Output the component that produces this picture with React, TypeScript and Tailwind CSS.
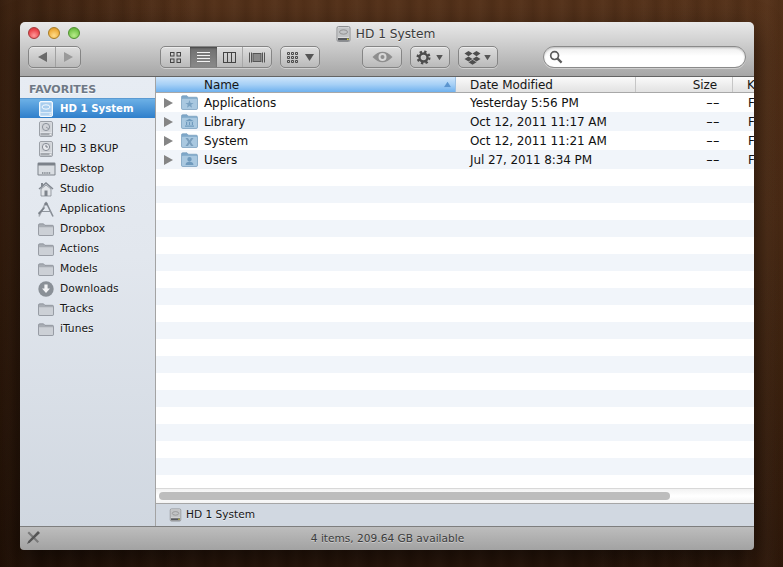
import React from "react";

const Tri = ({ dir, c, className }: { dir: "l" | "r" | "d" | "u"; c: string; className?: string }) => {
  const p = { l: "9,0 9,10 0,5", r: "0,0 9,5 0,10", d: "0,0 9,0 4.5,7", u: "0,7 9,7 4.5,0" }[dir];
  const h = dir === "d" || dir === "u" ? 7 : 10;
  return (
    <svg width="9" height={h} viewBox={`0 0 9 ${h}`} className={className}>
      <polygon points={p} fill={c} />
    </svg>
  );
};

const HD = ({ w = 16, h = 16, sel = false, variant = "sys" }: { w?: number; h?: number; sel?: boolean; variant?: "sys" | "disc" | "tm" }) => {
  const body = sel ? "#dcebf9" : variant === "sys" ? "#dcdcdc" : "#dfe2e7";
  const line = sel ? "#f4f9fe" : variant === "sys" ? "#8d8f92" : "#9ba0a7";
  const top = sel ? "#a8cdee" : variant === "sys" ? "#c2c4c6" : "#d0d3d8";
  return (
    <svg width={w} height={h} viewBox="0 0 16 16">
      <rect x="1.5" y="0.5" width="13" height="15" rx="1.5" fill={body} stroke={line} />
      <rect x="2.5" y="1.5" width="11" height="9.5" rx="1" fill={top} />
      {variant === "sys" && <ellipse cx="8" cy="6" rx="4" ry="2.2" fill="none" stroke={sel ? "#fff" : "#8c8c8c"} strokeWidth="0.9" />}
      {variant === "disc" && <circle cx="8" cy="6" r="3.6" fill="none" stroke="#8d939c" strokeWidth="1" />}
      {variant === "disc" && <path d="M8 6 L11 8" stroke="#8d939c" strokeWidth="0.9" />}
      {variant === "tm" && <circle cx="8" cy="6" r="3.6" fill="#e8eaee" stroke="#868c95" strokeWidth="1" />}
      {variant === "tm" && <path d="M8 3.8 V6 H10" fill="none" stroke="#6b727c" strokeWidth="0.9" />}
      <rect x="2.5" y="12" width="11" height="2.6" fill={sel ? "#b4d4f0" : variant === "sys" ? "#55585d" : "#a5a9af"} />
      <rect x="11.5" y="12.6" width="1.6" height="1.4" fill={variant === "sys" && !sel ? "#d9d23a" : "#eceef0"} />
    </svg>
  );
};

const GrayFolder = () => (
  <svg width="16" height="13" viewBox="0 0 16 13">
    <path d="M0.5 2 Q0.5 0.8 1.7 0.8 H5.5 L7 2.3 H14.3 Q15.5 2.3 15.5 3.5 V11.5 Q15.5 12.5 14.5 12.5 H1.5 Q0.5 12.5 0.5 11.5 Z" fill="#a8adb4" stroke="#858a92" strokeWidth="0.7" />
    <path d="M1 4.2 H15 V11.2 Q15 12 14.2 12 H1.8 Q1 12 1 11.2 Z" fill="#ccd0d6" />
  </svg>
);

const Desktop = () => (
  <svg width="19" height="14" viewBox="0 0 19 14">
    <rect x="0.5" y="0.5" width="18" height="13" rx="1.2" fill="#7c828a" />
    <rect x="1.5" y="3.5" width="16" height="9" fill="#d9dde2" />
    <path d="M5 11 H14" stroke="#7c828a" strokeWidth="1.4" strokeDasharray="1.4 0.8" />
  </svg>
);

const House = () => (
  <svg width="16" height="16" viewBox="0 0 16 16">
    <path d="M3 8 L8 4 L13 8 V15 H3 Z" fill="#e2e5e9" stroke="#858b93" strokeWidth="0.8" />
    <path d="M8 1 L15.5 7.6 L14.4 8.6 L8 3 L1.6 8.6 L0.5 7.6 L3 5.4 V2 H5 V3.6 Z" fill="#838991" />
    <rect x="6.5" y="9.5" width="3" height="5.5" fill="#7e848c" />
  </svg>
);

const AppsIcon = () => (
  <svg width="18" height="17" viewBox="0 0 18 17">
    <path d="M9 1 L16 15.5" stroke="#868c94" strokeWidth="1.6" fill="none" />
    <path d="M9 1 L2 15.5" stroke="#a6abb2" strokeWidth="1.6" fill="none" />
    <path d="M4 10.5 H14" stroke="#8f959d" strokeWidth="1.2" />
    <path d="M1 12 L7 6 L8 7 L2 14 Z" fill="#7b8189" />
    <circle cx="9" cy="3" r="1.6" fill="#7b8189" />
  </svg>
);

const DownloadIcon = () => (
  <svg width="16" height="16" viewBox="0 0 16 16">
    <circle cx="8" cy="8" r="7.7" fill="#8a9097" />
    <path d="M6.4 3.5 H9.6 V7.6 H12 L8 12 L4 7.6 H6.4 Z" fill="#f2f3f5" />
  </svg>
);

const BlueFolder = ({ g }: { g: "a" | "l" | "s" | "u" }) => (
  <svg width="17" height="15" viewBox="0 0 17 15">
    <path d="M0.5 2 Q0.5 0.7 1.8 0.7 H6 L7.5 2.2 H15.2 Q16.5 2.2 16.5 3.5 V13.3 Q16.5 14.5 15.3 14.5 H1.7 Q0.5 14.5 0.5 13.3 Z" fill="#7fa8c9" stroke="#6f97b8" strokeWidth="0.6" />
    <rect x="1" y="3.8" width="15" height="10.2" rx="0.8" fill="#a9c8e0" />
    {g === "a" && <path d="M8.5 5 L9.6 8 H12.6 L10.2 9.8 L11.1 12.8 L8.5 11 L5.9 12.8 L6.8 9.8 L4.4 8 H7.4 Z" fill="#7aa2c2" />}
    {g === "l" && <path d="M8.5 4.8 L13 7.2 H4 Z M5 8 H6.2 V11 H5 Z M7.9 8 H9.1 V11 H7.9 Z M10.8 8 H12 V11 H10.8 Z M4 11.6 H13 V12.8 H4 Z" fill="#6f9abd" />}
    {g === "s" && <path d="M4.5 5 H7 L8.5 7.6 L10 5 H12.5 L9.8 9 L12.5 13 H10 L8.5 10.4 L7 13 H4.5 L7.2 9 Z" fill="#7a9fbd" />}
    {g === "u" && <path d="M8.5 5 A2.2 2.2 0 0 1 8.5 9.4 A2.2 2.2 0 0 1 8.5 5 Z M4.5 13 Q4.8 9.8 8.5 9.8 Q12.2 9.8 12.5 13 Z" fill="#6f9abd" />}
  </svg>
);

const Btn = ({ className = "", children }: { className?: string; children: React.ReactNode }) => (
  <div className={`h-[22px] flex items-center rounded-[5px] border border-[#858585] bg-[linear-gradient(#dedede,#bababa)] shadow-[0_1px_0_rgba(255,255,255,0.4),inset_0_1px_0_rgba(255,255,255,0.45)] ${className}`}>
    {children}
  </div>
);

const sidebar: { label: string; icon: React.ReactNode }[] = [
  { label: "HD 1 System", icon: <HD sel /> },
  { label: "HD 2", icon: <HD variant="disc" /> },
  { label: "HD 3 BKUP", icon: <HD variant="tm" /> },
  { label: "Desktop", icon: <Desktop /> },
  { label: "Studio", icon: <House /> },
  { label: "Applications", icon: <AppsIcon /> },
  { label: "Dropbox", icon: <GrayFolder /> },
  { label: "Actions", icon: <GrayFolder /> },
  { label: "Models", icon: <GrayFolder /> },
  { label: "Downloads", icon: <DownloadIcon /> },
  { label: "Tracks", icon: <GrayFolder /> },
  { label: "iTunes", icon: <GrayFolder /> },
];

const files: { name: string; date: string; g: "a" | "l" | "s" | "u" }[] = [
  { name: "Applications", date: "Yesterday 5:56 PM", g: "a" },
  { name: "Library", date: "Oct 12, 2011 11:17 AM", g: "l" },
  { name: "System", date: "Oct 12, 2011 11:21 AM", g: "s" },
  { name: "Users", date: "Jul 27, 2011 8:34 PM", g: "u" },
];

const emptyRows = Array.from({ length: 19 }, (_, i) => i);

export default function App() {
  return (
    <div className="w-[783px] h-[567px] overflow-hidden pt-[22px] pl-[20px] font-['DejaVu_Sans',sans-serif] bg-[repeating-linear-gradient(90deg,rgba(0,0,0,0.07)_0px,rgba(255,255,255,0.012)_9px,rgba(0,0,0,0.04)_17px,rgba(255,255,255,0.02)_29px,rgba(0,0,0,0.07)_41px),linear-gradient(90deg,rgba(20,8,0,0.4)_0%,rgba(0,0,0,0)_25%,rgba(0,0,0,0)_75%,rgba(90,50,20,0.12)_100%),linear-gradient(180deg,#55321a_0%,#4c2c16_35%,#3c2210_65%,#2a160a_100%)]">
      <div className="w-[734px] h-[528px] flex flex-col rounded-t-[5px] rounded-b-[4px] overflow-hidden shadow-[0_10px_28px_rgba(0,0,0,0.55)]">
        {/* Title bar + toolbar */}
        <div className="h-[54px] shrink-0 bg-[linear-gradient(#e9e9e9,#a6a6a6)] flex flex-col">
          <div className="h-[24px] relative flex items-center justify-center shrink-0">
            <div className="absolute left-[8px] top-[5px] flex gap-[8px]">
              <div className="w-[12px] h-[12px] rounded-full border border-[#a33838] bg-[radial-gradient(circle_at_50%_75%,#ff9a9a,#ec4a4f_60%,#c63037)]" />
              <div className="w-[12px] h-[12px] rounded-full border border-[#a67a22] bg-[radial-gradient(circle_at_50%_75%,#ffdc8a,#f0b040_60%,#c98a22)]" />
              <div className="w-[12px] h-[12px] rounded-full border border-[#4f8f2e] bg-[radial-gradient(circle_at_50%_75%,#b8ec8a,#7cc950_60%,#53a02f)]" />
            </div>
            <div className="flex items-center gap-[4px] mr-[4px]">
              <HD w={17} h={16} />
              <span className="text-[12.2px] leading-none text-[#3b3b3b] [text-shadow:0_1px_0_rgba(255,255,255,0.6)]">HD 1 System</span>
            </div>
          </div>
          <div className="flex items-start pl-[8px]">
            <Btn className="w-[53px]">
              <div className="w-[27px] h-full flex items-center justify-center border-r border-[#a0a0a0]">
                <Tri dir="l" c="#6a6a6a" />
              </div>
              <div className="flex-1 flex items-center justify-center">
                <Tri dir="r" c="#9a9a9a" />
              </div>
            </Btn>
            <Btn className="w-[112px] ml-[79px] overflow-hidden">
              <div className="w-[29px] h-full flex items-center justify-center">
                <svg width="11" height="11" viewBox="0 0 11 11" fill="none" stroke="#444" strokeWidth="1">
                  <rect x="0.5" y="0.5" width="3.5" height="3.5" />
                  <rect x="7" y="0.5" width="3.5" height="3.5" />
                  <rect x="0.5" y="7" width="3.5" height="3.5" />
                  <rect x="7" y="7" width="3.5" height="3.5" />
                </svg>
              </div>
              <div className="w-[27px] h-full flex items-center justify-center bg-[linear-gradient(#6f6f6f,#8a8a8a)] shadow-[inset_0_1px_2px_rgba(0,0,0,0.4)]">
                <svg width="13" height="11" viewBox="0 0 13 11" stroke="#f2f2f2" strokeWidth="1">
                  <path d="M0 0.5H13M0 3.5H13M0 6.5H13M0 9.5H13" />
                </svg>
              </div>
              <div className="w-[26px] h-full flex items-center justify-center border-r border-[#a8a8a8]">
                <svg width="13" height="11" viewBox="0 0 13 11" fill="none" stroke="#444" strokeWidth="1">
                  <rect x="0.5" y="0.5" width="12" height="10" />
                  <path d="M4.5 0V11M8.5 0V11" />
                </svg>
              </div>
              <div className="flex-1 flex items-center justify-center">
                <svg width="16" height="11" viewBox="0 0 16 11" fill="none" stroke="#555" strokeWidth="1">
                  <rect x="4" y="1.5" width="8" height="8" fill="#8a8a8a" />
                  <path d="M0.5 0.5V10.5M2.5 0.5V10.5M13.5 0.5V10.5M15.5 0.5V10.5" />
                </svg>
              </div>
            </Btn>
            <Btn className="w-[40px] ml-[8px] justify-center gap-[7px]">
              <svg width="11" height="11" viewBox="0 0 11 11" fill="none" stroke="#4a4a4a" strokeWidth="1">
                <path d="M0.5 0.5H2.5V2.5H0.5ZM4.5 0.5H6.5V2.5H4.5ZM8.5 0.5H10.5V2.5H8.5Z" />
                <path d="M0.5 4.5H2.5V6.5H0.5ZM4.5 4.5H6.5V6.5H4.5ZM8.5 4.5H10.5V6.5H8.5Z" />
                <path d="M0.5 8.5H2.5V10.5H0.5ZM4.5 8.5H6.5V10.5H4.5ZM8.5 8.5H10.5V10.5H8.5Z" />
              </svg>
              <Tri dir="d" c="#555" />
            </Btn>
            <Btn className="w-[40px] ml-[42px] justify-center">
              <svg width="21" height="12" viewBox="0 0 21 12">
                <path d="M0.5 6 Q10.5 -4.5 20.5 6 Q10.5 16.5 0.5 6 Z" fill="#8e8e8e" />
                <circle cx="10.5" cy="6" r="4" fill="#d8d8d8" />
                <circle cx="10.5" cy="6" r="2" fill="#8e8e8e" />
              </svg>
            </Btn>
            <Btn className="w-[40px] ml-[8px] justify-center gap-[4px]">
              <svg width="15" height="15" viewBox="0 0 15 15">
                <circle cx="7.5" cy="7.5" r="5.6" fill="none" stroke="#4c4c4c" strokeWidth="2.8" strokeDasharray="2.2 2.2" />
                <circle cx="7.5" cy="7.5" r="4" fill="none" stroke="#4c4c4c" strokeWidth="2.4" />
                <circle cx="7.5" cy="7.5" r="1.6" fill="#c4c4c4" />
              </svg>
              <Tri dir="d" c="#555" className="scale-75" />
            </Btn>
            <Btn className="w-[40px] ml-[8px] justify-center gap-[2px]">
              <svg width="17" height="15" viewBox="0 0 17 15" fill="#4e4e4e">
                <path d="M4.5 1 L8.5 3.6 L4.5 6.2 L0.5 3.6 Z" />
                <path d="M12.5 1 L16.5 3.6 L12.5 6.2 L8.5 3.6 Z" />
                <path d="M4.5 6.4 L8.5 9 L4.5 11.6 L0.5 9 Z" />
                <path d="M12.5 6.4 L16.5 9 L12.5 11.6 L8.5 9 Z" />
                <path d="M4.5 12.3 L8.5 9.8 L12.5 12.3 L8.5 14.8 Z" />
              </svg>
              <Tri dir="d" c="#555" className="scale-75" />
            </Btn>
            <div className="w-[203px] h-[22px] ml-[45px] rounded-full border border-[#8a8a8a] bg-[linear-gradient(#ececec,#ffffff_45%,#ffffff)] shadow-[inset_0_1px_2px_rgba(0,0,0,0.2),0_1px_0_rgba(255,255,255,0.4)] flex items-center pl-[5px]">
              <svg width="14" height="14" viewBox="0 0 14 14" fill="none" stroke="#5c5c5c" strokeWidth="1.7">
                <circle cx="5.6" cy="5.6" r="3.9" />
                <path d="M8.6 8.6 L12.6 12.6" strokeWidth="2.2" />
              </svg>
            </div>
          </div>
        </div>
        <div className="h-px shrink-0 bg-[#636363]" />

        {/* Main */}
        <div className="h-[449px] shrink-0 flex">
          <div className="w-[136px] shrink-0 border-r border-[#a3a3a3] bg-[linear-gradient(#e7ecf3,#e2e7ee_40%,#d0d7e0)] flex flex-col">
            <div className="h-[21px] pl-[9px] flex items-end pb-[2px] text-[11px] leading-[13px] font-bold text-[#6f7986] [text-shadow:0_1px_0_rgba(255,255,255,0.7)]">FAVORITES</div>
            {sidebar.map((s, i) => (
              <div
                key={s.label}
                className={`h-[20px] flex items-center ${i === 0 ? "text-[10.2px] bg-[linear-gradient(#6cb0e6,#2f7fcb)] border-t border-[#5a9ad2] text-white font-bold" : "pt-[2px] text-[10.7px] text-[#161616] [text-shadow:0_1px_0_rgba(255,255,255,0.6)]"}`}
              >
                <div className="w-[40px] shrink-0 flex justify-center pl-[12px]">{s.icon}</div>
                <span>{s.label}</span>
              </div>
            ))}
          </div>

          <div className="flex-1 min-w-0 flex flex-col bg-white">
            {/* Header */}
            <div className="h-[16px] shrink-0 flex text-[12px] leading-[16px] tracking-[-0.07px] text-[#161616] border-b border-[#a8a8a8] bg-[linear-gradient(#fafafa,#e2e2e2)]">
              <div className="w-[300px] shrink-0 flex justify-between items-center pl-[48px] pr-[3px] border-r border-[#9cc0e2] bg-[linear-gradient(#cfe5fa,#a6d0f6_50%,#6fb1ee)]">
                <span>Name</span>
                <Tri dir="u" c="#5b95cf" className="scale-[0.8]" />
              </div>
              <div className="w-[180px] shrink-0 pl-[14px] border-r border-[#c6c6c6]">Date Modified</div>
              <div className="w-[97px] shrink-0 pr-[15px] text-right border-r border-[#c6c6c6]">Size</div>
              <div className="pl-[14px] whitespace-nowrap">K</div>
            </div>

            {/* List */}
            <div className="h-[395px] shrink-0 overflow-hidden">
              {files.map((f, i) => (
                <div key={f.name} className={`h-[19px] flex items-center text-[12px] tracking-[-0.1px] text-[#111] ${i % 2 ? "bg-[#f1f5fa]" : "bg-white"}`}>
                  <div className="w-[48px] shrink-0 flex items-center pl-[8px] gap-[8px]">
                    <Tri dir="r" c="#858585" />
                    <BlueFolder g={f.g} />
                  </div>
                  <div className="w-[266px] shrink-0">{f.name}</div>
                  <div className="w-[200px] shrink-0 whitespace-nowrap">{f.date}</div>
                  <div className="w-[49px] shrink-0 text-right">
                    <span className="inline-block origin-right scale-x-[1.6]">--</span>
                  </div>
                  <div className="pl-[29px]">F</div>
                </div>
              ))}
              {emptyRows.map((i) => (
                <div key={i} className={`h-[17px] ${i % 2 ? "bg-[#f1f5fa]" : "bg-white"}`} />
              ))}
            </div>

            {/* Scrollbar */}
            <div className="h-[15px] shrink-0 border-t border-[#d8d8d8] bg-[linear-gradient(#f2f2f2,#ffffff_50%,#f4f4f4)] pt-[3px] pl-[3px]">
              <div className="w-[511px] h-[8px] rounded-full bg-[#bdbdbd]" />
            </div>

            {/* Path bar */}
            <div className="h-[23px] shrink-0 border-t border-[#a6a6a6] bg-[#d1d8e1] flex items-center pl-[13px] gap-[4px] text-[10.6px] text-[#161616] [text-shadow:0_1px_0_rgba(255,255,255,0.5)]">
              <HD w={13} h={14} />
              <span>HD 1 System</span>
            </div>
          </div>
        </div>

        {/* Status bar */}
        <div className="h-[24px] shrink-0 border-t border-[#7e7e7e] bg-[linear-gradient(#bdbdbd,#a2a2a2)] relative flex items-center justify-center text-[10.6px] text-[#3c3c3c] [text-shadow:0_1px_0_rgba(255,255,255,0.4)]">
          <svg width="15" height="15" viewBox="0 0 15 15" className="absolute left-[6px] top-[3px]">
            <path d="M1.5 3 L3 1.5 L13 11.5 L11.5 13 Z" fill="#7a7a7a" />
            <path d="M12 1 L14 3 L4 12.5 L1 14 L2.4 11 Z" fill="#555555" />
          </svg>
          <span className="ml-[1px]">4 items, 209.64 GB available</span>
        </div>
      </div>
    </div>
  );
}
